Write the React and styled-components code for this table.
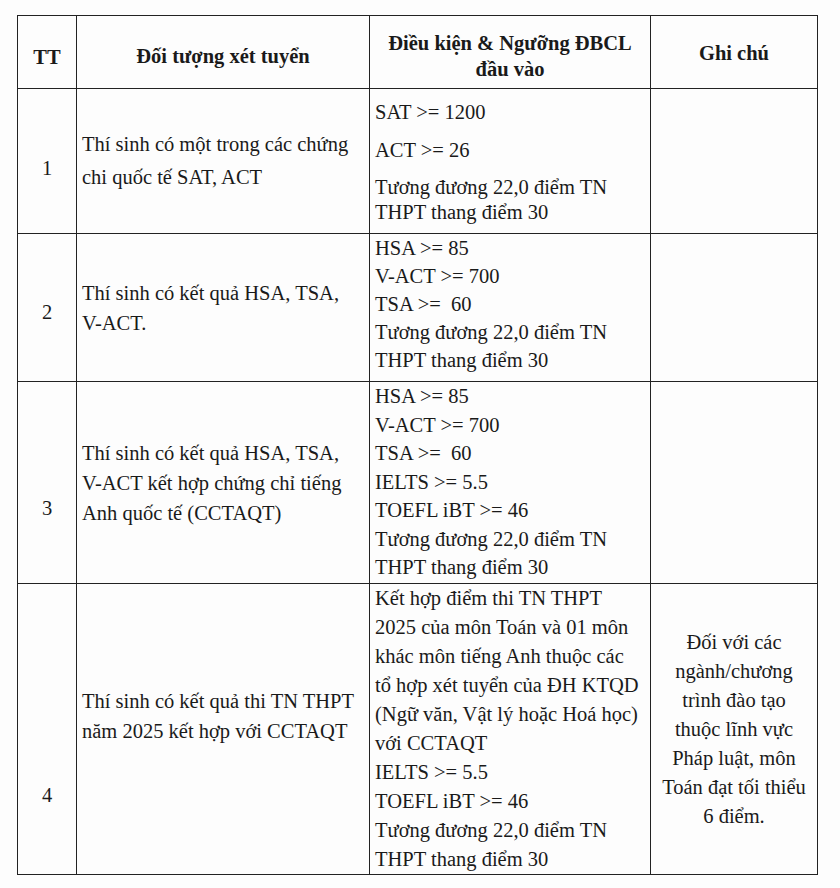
import React from "react";
import styled, { createGlobalStyle } from "styled-components";

const Global = createGlobalStyle`
  html, body { margin: 0; padding: 0; background: #fdfdfd; }
  body, table, th, td { font-family: "Liberation Serif", "Times New Roman", serif; color: #1a1a1a; }
`;

const Page = styled.div`
  width: 840px;
  height: 888px;
  padding: 15px 0 0 17px;
  box-sizing: border-box;
  overflow: hidden;
`;

const Table = styled.table`
  border-collapse: collapse;
  table-layout: fixed;
  width: 800px;
  font-family: "Liberation Serif", "Times New Roman", serif;
  font-size: 20.5px;
  line-height: 29px;
`;

const Col = styled.col`
  width: ${(p) => p.$w}px;
`;

const Row = styled.tr`
  height: ${(p) => p.$h}px;
`;

const Head = styled.th`
  border: 1.6px solid #222;
  font-weight: bold;
  text-align: center;
  vertical-align: middle;
  padding: ${(p) => p.$pt ?? 8}px 5px 0 5px;
  line-height: 26px;
`;

const NumCell = styled.td`
  border: 1.6px solid #222;
  text-align: center;
  vertical-align: bottom;
  padding: 0 0 ${(p) => p.$pb}px 0;
`;

const SubjectCell = styled.td`
  border: 1.6px solid #222;
  vertical-align: middle;
  padding: 0 5px ${(p) => p.$pb || 0}px 5px;
  line-height: ${(p) => p.$lh || 30}px;
`;

const CondCell = styled.td`
  border: 1.6px solid #222;
  vertical-align: top;
  padding: ${(p) => p.$pt || 0}px 5px 0 5px;
`;

const Line = styled.div`
  line-height: ${(p) => p.$lh || 29}px;
  margin-bottom: ${(p) => p.$mb || 0}px;
  white-space: nowrap;
`;

const NoteCell = styled.td`
  border: 1.6px solid #222;
  text-align: center;
  vertical-align: middle;
  padding: 0 4px;
  line-height: 29px;
`;

export default function App() {
  return (
    <Page>
      <Global />
      <Table>
        <colgroup>
          <Col $w={59} />
          <Col $w={293} />
          <Col $w={281} />
          <Col $w={167} />
        </colgroup>
        <thead>
          <Row $h={73}>
            <Head $pt={10}>TT</Head>
            <Head $pt={8}>Đối tượng xét tuyển</Head>
            <Head $pt={8}>
              Điều kiện &amp; Ngưỡng ĐBCL
              <br />
              đầu vào
            </Head>
            <Head $pt={2}>Ghi chú</Head>
          </Row>
        </thead>
        <tbody>
          <Row $h={145}>
            <NumCell $pb={50}>1</NumCell>
            <SubjectCell $lh={33}>
              Thí sinh có một trong các chứng
              <br />
              chi quốc tế SAT, ACT
            </SubjectCell>
            <CondCell $pt={10}>
              <Line $lh={26} $mb={12}>SAT &gt;= 1200</Line>
              <Line $lh={26} $mb={12}>ACT &gt;= 26</Line>
              <Line $lh={25}>Tương đương 22,0 điểm TN</Line>
              <Line $lh={25}>THPT thang điểm 30</Line>
            </CondCell>
            <NoteCell />
          </Row>
          <Row $h={148}>
            <NumCell $pb={54}>2</NumCell>
            <SubjectCell>
              Thí sinh có kết quả HSA, TSA,
              <br />
              V-ACT.
            </SubjectCell>
            <CondCell>
              <Line $lh={28}>HSA &gt;= 85</Line>
              <Line $lh={28}>V-ACT &gt;= 700</Line>
              <Line $lh={28}>TSA &gt;= &nbsp;60</Line>
              <Line $lh={28}>Tương đương 22,0 điểm TN</Line>
              <Line $lh={28}>THPT thang điểm 30</Line>
            </CondCell>
            <NoteCell />
          </Row>
          <Row $h={202}>
            <NumCell $pb={60}>3</NumCell>
            <SubjectCell>
              Thí sinh có kết quả HSA, TSA,
              <br />
              V-ACT kết hợp chứng chỉ tiếng
              <br />
              Anh quốc tế (CCTAQT)
            </SubjectCell>
            <CondCell>
              <Line $lh={28.5}>HSA &gt;= 85</Line>
              <Line $lh={28.5}>V-ACT &gt;= 700</Line>
              <Line $lh={28.5}>TSA &gt;= &nbsp;60</Line>
              <Line $lh={28.5}>IELTS &gt;= 5.5</Line>
              <Line $lh={28.5}>TOEFL iBT &gt;= 46</Line>
              <Line $lh={28.5}>Tương đương 22,0 điểm TN</Line>
              <Line $lh={28.5}>THPT thang điểm 30</Line>
            </CondCell>
            <NoteCell />
          </Row>
          <Row $h={291}>
            <NumCell $pb={64}>4</NumCell>
            <SubjectCell $pb={26}>
              Thí sinh có kết quả thi TN THPT
              <br />
              năm 2025 kết hợp với CCTAQT
            </SubjectCell>
            <CondCell>
              <Line>Kết hợp điểm thi TN THPT</Line>
              <Line>2025 của môn Toán và 01 môn</Line>
              <Line>khác môn tiếng Anh thuộc các</Line>
              <Line>tổ hợp xét tuyển của ĐH KTQD</Line>
              <Line>(Ngữ văn, Vật lý hoặc Hoá học)</Line>
              <Line>với CCTAQT</Line>
              <Line>IELTS &gt;= 5.5</Line>
              <Line>TOEFL iBT &gt;= 46</Line>
              <Line>Tương đương 22,0 điểm TN</Line>
              <Line>THPT thang điểm 30</Line>
            </CondCell>
            <NoteCell>
              Đối với các
              <br />
              ngành/chương
              <br />
              trình đào tạo
              <br />
              thuộc lĩnh vực
              <br />
              Pháp luật, môn
              <br />
              Toán đạt tối thiểu
              <br />
              6 điểm.
            </NoteCell>
          </Row>
        </tbody>
      </Table>
    </Page>
  );
}
